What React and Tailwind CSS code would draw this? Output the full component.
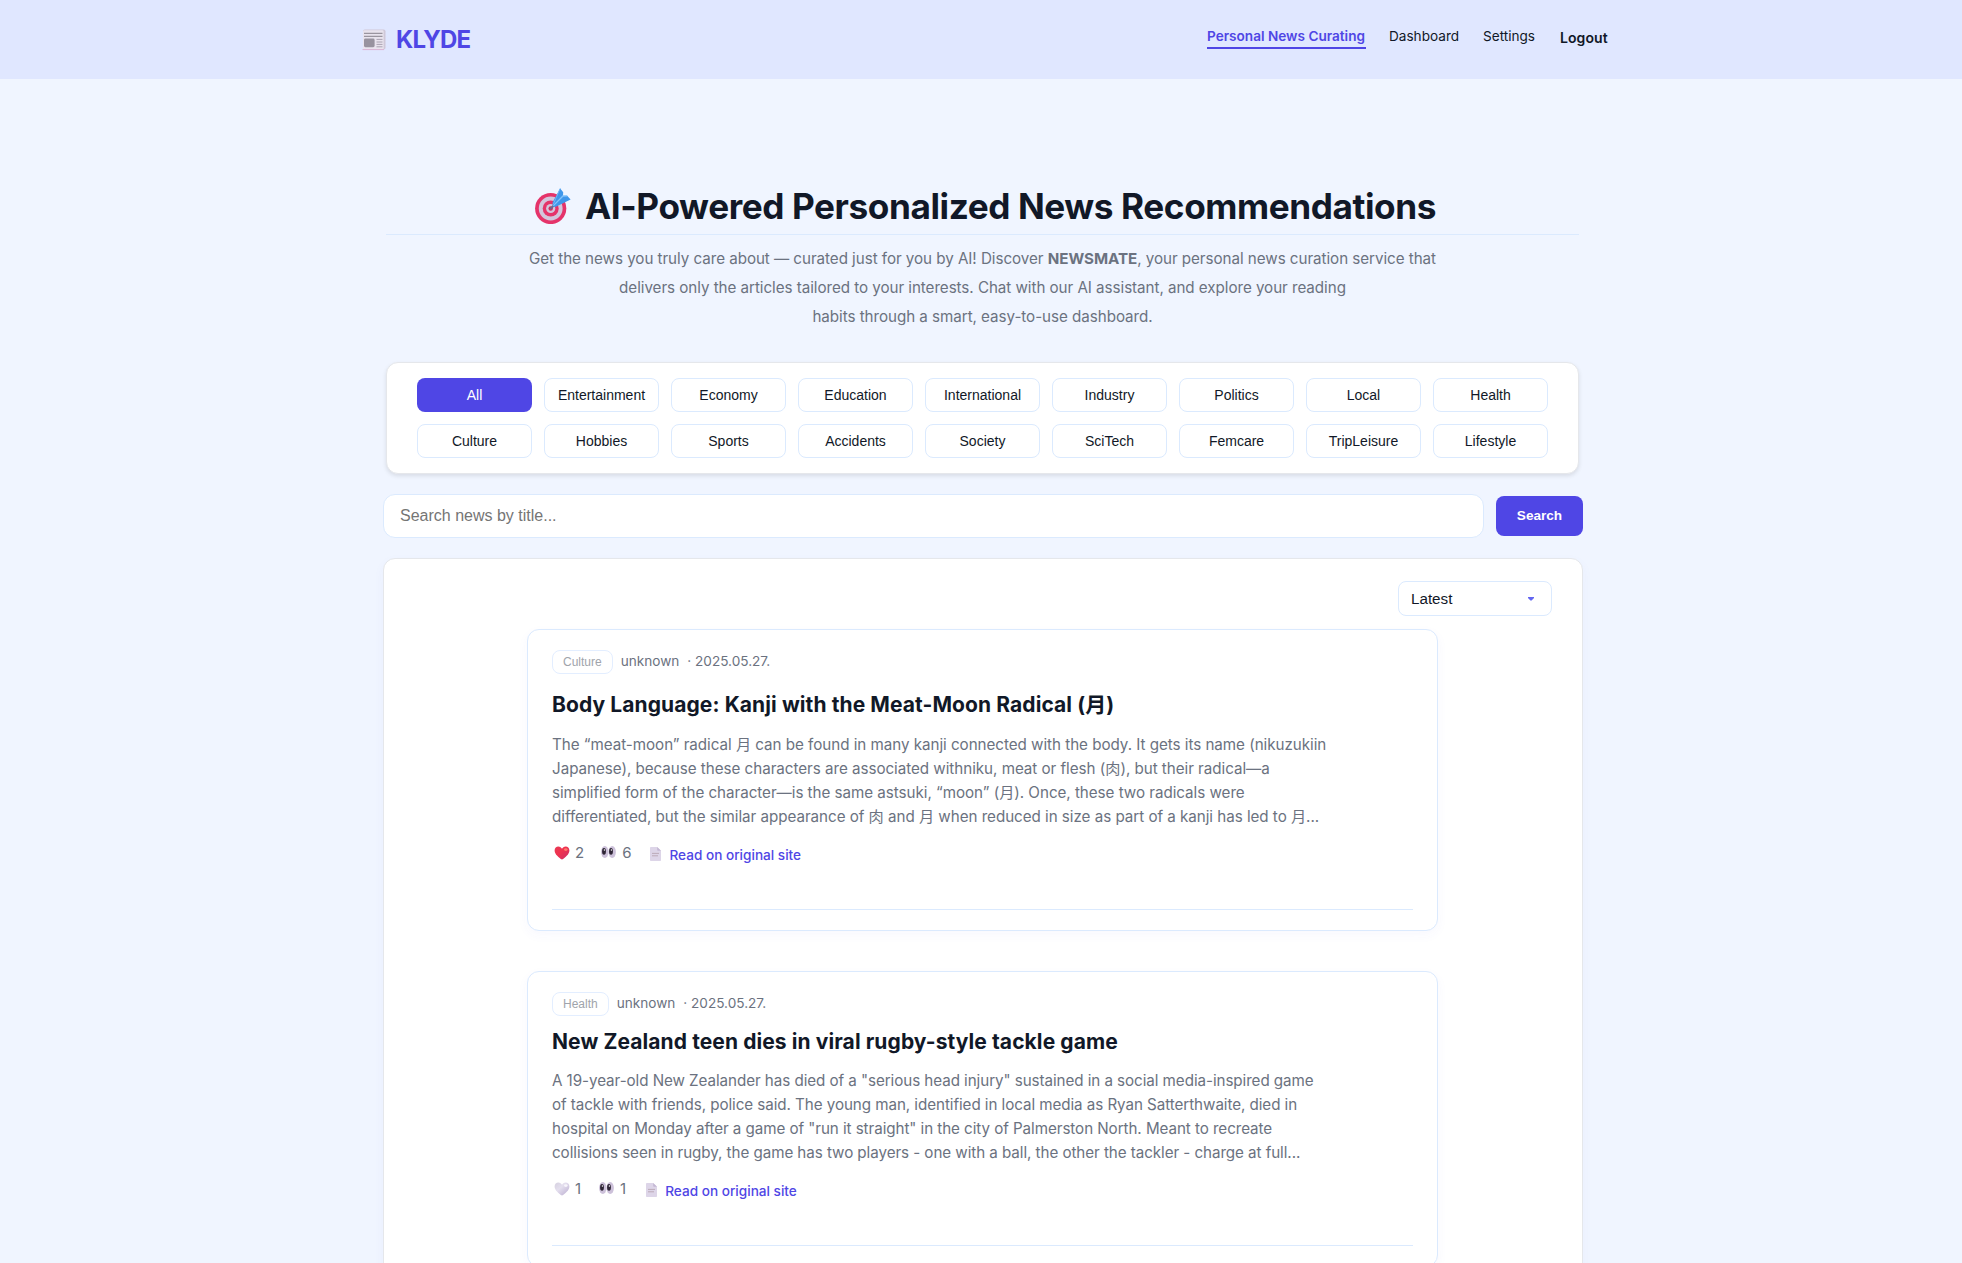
import React from "react";

const categories = [
  "All", "Entertainment", "Economy", "Education", "International", "Industry", "Politics", "Local", "Health",
  "Culture", "Hobbies", "Sports", "Accidents", "Society", "SciTech", "Femcare", "TripLeisure", "Lifestyle",
];

const articles = [
  {
    tag: "Culture",
    title: "Body Language: Kanji with the Meat-Moon Radical (月)",
    tall: true,
    liked: true,
    likes: 2,
    views: 6,
    lines: [
      "The “meat-moon” radical 月 can be found in many kanji connected with the body. It gets its name (nikuzukiin",
      "Japanese), because these characters are associated withniku, meat or flesh (肉), but their radical—a",
      "simplified form of the character—is the same astsuki, “moon” (月). Once, these two radicals were",
      "differentiated, but the similar appearance of 肉 and 月 when reduced in size as part of a kanji has led to 月...",
    ],
  },
  {
    tag: "Health",
    title: "New Zealand teen dies in viral rugby-style tackle game",
    tall: false,
    liked: false,
    likes: 1,
    views: 1,
    lines: [
      "A 19-year-old New Zealander has died of a \"serious head injury\" sustained in a social media-inspired game",
      "of tackle with friends, police said. The young man, identified in local media as Ryan Satterthwaite, died in",
      "hospital on Monday after a game of \"run it straight\" in the city of Palmerston North. Meant to recreate",
      "collisions seen in rugby, the game has two players - one with a ball, the other the tackler - charge at full...",
    ],
  },
];

function NewsIcon() {
  return (
    <svg className="block h-[22px] w-6 shrink-0" viewBox="0 0 24 22">
      <rect x="1" y="0.5" width="22.5" height="20" rx="1.8" fill="#cfc8d8" />
      <rect x="1" y="1.2" width="20.6" height="19.6" rx="1.2" fill="#e9e4ee" />
      <path d="M0.5 20.6H22" stroke="#d9b4d4" strokeWidth="1" />
      <path d="M2 4.4H20.5M2 7.4H20.5" stroke="#9a959f" strokeWidth="1.4" />
      <rect x="2" y="9.6" width="10.6" height="8.6" rx="1.4" fill="#98939f" />
      <path d="M14.5 10.4H20.5M14.5 13H20.5M14.5 15.4H20.5M14.5 17.8H20.5" stroke="#aaa4b2" strokeWidth="1" />
    </svg>
  );
}

function TargetIcon() {
  return (
    <svg className="block h-[36px] w-[36px] shrink-0" viewBox="0 0 36 36">
      <circle cx="15.7" cy="20.5" r="15.6" fill="#e5336a" />
      <circle cx="15.7" cy="20.5" r="11.9" fill="#d3c5dc" />
      <circle cx="15.7" cy="20.5" r="8" fill="#e5336a" />
      <circle cx="15.7" cy="20.5" r="4.6" fill="#d3c5dc" />
      <circle cx="15.7" cy="20.5" r="2.2" fill="#d92a5c" />
      <path d="M15.7 20.5L25 11.5" stroke="#6a6b8e" strokeWidth="2" strokeLinecap="round" />
      <path d="M17.6 14.2L25.2 0.4L28.2 4.2L28 8L32.2 7.8L35.6 11.4L21.4 18.6Q17 20.2 17.6 14.2Z" fill="#3f97ea" />
      <path d="M18.4 17.6L28 8L32.2 7.8" stroke="#83c3fb" strokeWidth="1.3" fill="none" />
      <path d="M25.2 0.4L21 10L18.4 16" stroke="#6fb5f5" strokeWidth="1" fill="none" />
    </svg>
  );
}

function HeartIcon({ liked }) {
  const id = liked ? "heart-on" : "heart-off";
  return (
    <svg className="block h-[14px] w-4 shrink-0" viewBox="0 0 16 14">
      <defs>
        <linearGradient id={id} x1="0" y1="0" x2="1" y2="1">
          <stop offset="0" stopColor={liked ? "#e53a55" : "#d5d0df"} />
          <stop offset="0.4" stopColor={liked ? "#f0324f" : "#e4dfee"} />
          <stop offset="1" stopColor={liked ? "#c92f68" : "#b9abcf"} />
        </linearGradient>
      </defs>
      <path d="M8 13.6C5.2 11.6 0.6 8.4 0.6 4.4C0.6 1.8 2.4 0.4 4.3 0.4C6 0.4 7.4 1.3 8 2.8C8.6 1.3 10 0.4 11.7 0.4C13.6 0.4 15.4 1.8 15.4 4.4C15.4 8.4 10.8 11.6 8 13.6Z" fill={`url(#${id})`} />
      <ellipse cx="11.8" cy="3.6" rx="1.8" ry="1.3" fill={liked ? "#ff7a6b" : "#f7f5fb"} />
    </svg>
  );
}

function EyesIcon() {
  return (
    <svg className="block h-3 w-[15px] shrink-0" viewBox="0 0 15 12">
      <ellipse cx="3.8" cy="6" rx="3.7" ry="6" fill="#cdc1da" />
      <ellipse cx="11.2" cy="6" rx="3.7" ry="6" fill="#cdc1da" />
      <ellipse cx="3" cy="5.4" rx="1.9" ry="3.3" fill="#2f2636" />
      <ellipse cx="10" cy="5.4" rx="1.9" ry="3.3" fill="#2f2636" />
      <circle cx="3.4" cy="4" r="0.7" fill="#fff" />
      <circle cx="10.4" cy="4" r="0.7" fill="#fff" />
    </svg>
  );
}

function PageIcon() {
  return (
    <svg className="block h-[14px] w-[11px] shrink-0" viewBox="0 0 11 14">
      <path d="M0 0.8Q0 0 0.8 0H7.2L11 3.8V13.2Q11 14 10.2 14H0.8Q0 14 0 13.2Z" fill="#ddd5e8" />
      <path d="M7.2 0V3Q7.2 3.8 8 3.8H11Z" fill="#c4b8d3" />
      <path d="M2 6.4H9M2 8.8H8" stroke="#b8a5b2" strokeWidth="0.9" />
    </svg>
  );
}

function Header() {
  return (
    <header className="h-[79px] bg-[#e0e7ff]">
      <div className="ml-[362px] flex w-[1246px] justify-between">
        <div className="flex pt-[29px]">
          <NewsIcon />
          <span className="-mt-[4px] ml-[10px] text-[24px] leading-[30px] font-bold tracking-[-0.75px] text-[#4f46e5]">KLYDE</span>
        </div>
        <nav className="flex pt-[25px] text-[13.6px] leading-[22px] whitespace-nowrap text-[#111827]">
          <a className="h-[24px] w-[159px] border-b-2 border-[#4f46e5] font-semibold text-[#4f46e5]">Personal News Curating</a>
          <a className="ml-[23px] w-[70px]">Dashboard</a>
          <a className="ml-[24px] w-[53px]">Settings</a>
          <a className="mt-[2px] ml-[24px] w-[48px] text-[14px] font-semibold tracking-[0.08px]">Logout</a>
        </nav>
      </div>
    </header>
  );
}

function Article({ a }) {
  return (
    <article className={`${a.tall ? "h-[302px]" : "h-[296px]"} w-[911px] shrink-0 rounded-xl border border-[#dbeafe] bg-white px-6 pt-5 shadow-[0_4px_12px_rgba(79,70,229,0.04)]`}>
      <div className="flex h-6 items-center text-[13.6px] whitespace-nowrap text-[#6b7280]">
        <span className="flex h-6 items-center rounded-lg border border-[#e3eeff] px-[10px] font-['Liberation_Sans',sans-serif] text-[12px] text-[#a0a4ab]">{a.tag}</span>
        <span className="-mt-[2px] ml-2 leading-[22px]">unknown</span>
        <span className="-mt-[2px] ml-2 leading-[22px]">· 2025.05.27.</span>
      </div>
      <h2 className={`${a.tall ? "mt-3" : "mt-[7px]"} h-[37px] text-[21px] leading-[37px] font-bold tracking-[0.09px] whitespace-nowrap text-[#111827]`}>{a.title}</h2>
      <div className={`${a.tall ? "mt-[10px] tracking-[-0.036px]" : "mt-[9px] tracking-[-0.065px]"} text-[15.2px] leading-6 text-[#6b7280]`}>
        {a.lines.map((l) => (
          <p key={l} className="h-6 whitespace-nowrap">{l}</p>
        ))}
      </div>
      <div className="mt-[14px] flex h-5 text-[15px] leading-5 whitespace-nowrap text-[#6b7280]">
        <span className="mt-[3px] ml-[2px]"><HeartIcon liked={a.liked} /></span>
        <span className="ml-[5px]">{a.likes}</span>
        <span className={a.tall ? "mt-[3px] ml-[17px]" : "mt-[3px] ml-[18px]"}><EyesIcon /></span>
        <span className="ml-[6px]">{a.views}</span>
        <span className={a.tall ? "mt-[4px] ml-[19px]" : "mt-[4px] ml-5"}><PageIcon /></span>
        <a className="mt-[2px] ml-2 text-[13.6px] font-medium text-[#4f46e5]">Read on original site</a>
      </div>
      <hr className="mt-[46px] border-t border-[#dbeafe]" />
    </article>
  );
}

export default function App() {
  return (
    <div className="h-[1263px] w-[1962px] overflow-hidden bg-[#f0f5ff] font-['Inter','Noto_Sans_CJK_KR',sans-serif]">
      <Header />
      <main className="ml-[383px] w-[1200px]">
        <section className="mx-[3px] w-[1193px]">
          <div className="flex h-[156px] items-end border-b border-[#dbeafe] pb-[10px] pl-[149px]">
            <TargetIcon />
            <h1 className="-mb-[4px] ml-[14px] text-[35.2px] leading-[44px] font-bold tracking-[-0.42px] whitespace-nowrap text-[#111827]">AI-Powered Personalized News Recommendations</h1>
          </div>
          <div className="mt-[9px] text-center text-[15.2px] leading-[29px] tracking-[-0.05px] whitespace-nowrap text-[#6b7280]">
            <p>Get the news you truly care about — curated just for you by AI! Discover <b className="font-bold">NEWSMATE</b>, your personal news curation service that</p>
            <p>delivers only the articles tailored to your interests. Chat with our AI assistant, and explore your reading</p>
            <p>habits through a smart, easy-to-use dashboard.</p>
          </div>
        </section>
        <section className="mt-[31px] ml-[3px] grid h-[112px] w-[1193px] grid-cols-9 content-start gap-3 rounded-xl border border-[#e5e7eb] bg-white px-[30px] pt-[15px] font-['Liberation_Sans',sans-serif] shadow-[0_2px_4px_rgba(0,0,0,0.1)]">
          {categories.map((c, i) => (
            <button key={c} className={i === 0 ? "h-[34px] rounded-lg bg-[#4f46e5] text-[14px] text-white" : "h-[34px] rounded-lg border border-[#dbeafe] bg-white text-[14px] text-[#111827]"}>{c}</button>
          ))}
        </section>
        <div className="mt-5 flex items-center gap-3 font-['Liberation_Sans',sans-serif]">
          <div className="h-[44px] w-[1101px] rounded-xl border border-[#dbeafe] bg-white px-4 text-[16px] leading-[42px] text-[#757575]">Search news by title...</div>
          <button className="h-10 w-[87px] rounded-lg bg-[#4f46e5] text-[13.6px] font-bold text-white">Search</button>
        </div>
        <section className="mt-5 flex h-[740px] flex-col items-start rounded-xl border border-[#e5e7eb] bg-white pt-[22px] shadow-[0_4px_12px_rgba(79,70,229,0.04)]">
          <div className="mr-[30px] flex h-[35px] w-[154px] items-center justify-between self-end rounded-lg border border-[#dbeafe] pr-[17px] pl-3 font-['Liberation_Sans',sans-serif] text-[15.2px] text-[#111827]">
            <span className="pt-px">Latest</span>
            <svg className="h-1 w-[6px]" viewBox="0 0 6 4"><path d="M0 0H6V1L3.6 3.6H2.4L0 1Z" fill="#6366f1" /></svg>
          </div>
          <div className="mt-[13px] ml-[143px] flex flex-col gap-10">
            {articles.map((a) => <Article key={a.tag} a={a} />)}
          </div>
        </section>
      </main>
    </div>
  );
}
